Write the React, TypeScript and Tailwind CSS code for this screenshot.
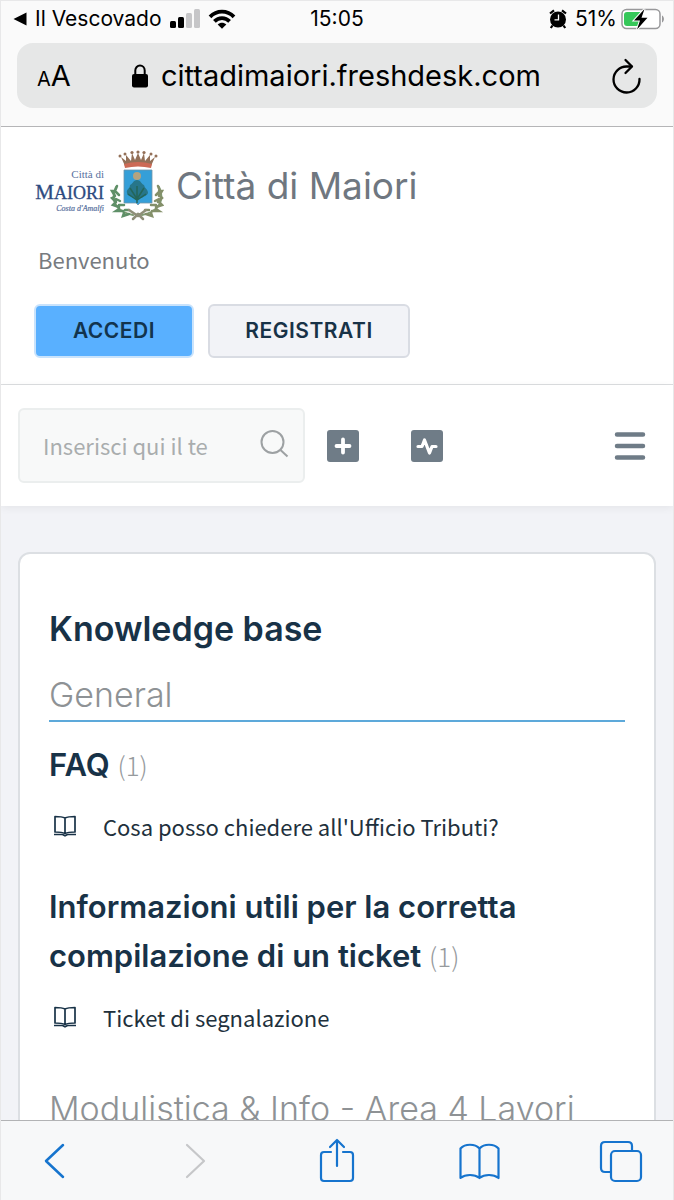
import React from "react";

const ui = "font-['Inter','Liberation_Sans',sans-serif]";
const body = "font-['Noto_Sans_CJK_SC','Noto_Sans',sans-serif]";

function StatusBar() {
  return (
    <div className="grid h-9 grid-cols-[1fr_auto_1fr] items-center px-2 text-[21px] leading-6 text-black">
      <div className="flex items-center pl-1">
        <svg viewBox="0 0 14 14" className="mr-2 h-[14px] w-[14px]" aria-hidden="true">
          <path d="M.5 7 13.5.5v13z" />
        </svg>
        <span className="mr-2">Il Vescovado</span>
        <svg viewBox="0 0 30 20" className="mr-2 h-5 w-[30px]" aria-hidden="true">
          <rect x="0" y="12" width="6" height="7" rx="1.5" />
          <rect x="8" y="8" width="6" height="11" rx="1.5" />
          <rect x="16" y="4" width="6" height="15" rx="1.5" fill="#c6c6c8" />
          <rect x="24" y="0" width="6" height="19" rx="1.5" fill="#c6c6c8" />
        </svg>
        <svg viewBox="0 0 28 20" className="h-5 w-7" aria-hidden="true">
          <g fill="none" stroke="#000" strokeWidth="3.8">
            <path d="M2 7.8C8.8 1 19.200 1 26 7.800" />
            <path d="M6.400 12.300C10.700 8 17.300 8 21.600 12.300" />
          </g>
          <path d="M9.700 15.500c2.500-2.300 6.100-2.300 8.600 0L14 19.800z" />
        </svg>
      </div>
      <span>15:05</span>
      <div className="flex items-center justify-end">
        <svg viewBox="0 0 18 20" className="mr-2 h-5 w-[18px]" aria-hidden="true">
          <circle cx="9" cy="10.500" r="8" />
          <path d="m1 4.500 4-3.200M17 4.500l-4-3.200M3.500 16.500 1.800 19M14.500 16.500l1.700 2.500" stroke="#000" strokeWidth="2.200" />
          <path d="M9.500 5.500v5.300H5.500" fill="none" stroke="#fff" strokeWidth="1.300" />
        </svg>
        <span className="mr-1">51%</span>
        <svg viewBox="0 0 44 22" className="h-[22px] w-11" aria-hidden="true">
          <rect x="1" y="1.500" width="38" height="19" rx="4.500" fill="#fff" stroke="#98989a" strokeWidth="1.500" />
          <path d="M6 4h14v14H6a3 3 0 0 1-3-3V7a3 3 0 0 1 3-3z" fill="#35c759" />
          <path d="M41 7.500c2.600 1.200 2.600 5.800 0 7z" fill="#98989a" />
          <path d="M23.500 1 13 12.500h6L16 21.500 26.500 9.800H20.500z" stroke="#fff" strokeWidth="2" paintOrder="stroke" />
        </svg>
      </div>
    </div>
  );
}

function AddressBar() {
  return (
    <div className="mx-4 mt-[6px] mb-[18px] flex h-[65px] items-center rounded-2xl bg-[#e6e7e7] px-5 text-black">
      <button type="button" aria-label="Dimensione testo" className="flex items-baseline pt-1 leading-8">
        <span className="text-[20px]">A</span>
        <span className="text-[29px]">A</span>
      </button>
      <div className="flex flex-1 items-center justify-center pr-[10px]">
        <svg viewBox="0 0 18 24" className="mr-3 h-6 w-[18px]" aria-hidden="true">
          <rect x="1" y="10" width="16" height="13.500" rx="2" />
          <path d="M4.300 11V6.500a4.700 5 0 0 1 9.400 0V11" fill="none" stroke="#000" strokeWidth="2" />
        </svg>
        <span className="text-[29px] leading-9">cittadimaiori.freshdesk.com</span>
      </div>
      <button type="button" aria-label="Ricarica" className="-mr-2">
        <svg viewBox="0 0 34 36" className="h-9 w-[34px]" fill="none" stroke="#000" strokeWidth="2.300" strokeLinecap="round" strokeLinejoin="round">
          <path d="M20.500 8.500H16A13 13 0 1 0 28.500 21" />
          <path d="M14.500 2 21 8.500 14.500 15" />
        </svg>
      </button>
    </div>
  );
}

function Crest() {
  return (
    <svg viewBox="0 0 130 74" className="h-[74px] w-[130px] shrink-0" role="img" aria-label="Città di Maiori, Costa d'Amalfi">
      <g textAnchor="end" fontFamily="'Liberation Serif', serif">
        <text x="70" y="29" fontSize="11" fill="#5871a0">Città di</text>
        <text x="70" y="50" fontSize="21" fill="#2d4a80" stroke="#2d4a80" strokeWidth=".3">M<tspan fontSize="18">AIORI</tspan></text>
        <text x="70" y="62" fontSize="8" fontStyle="italic" fill="#5871a0" stroke="#5871a0" strokeWidth=".2">Costa d'Amalfi</text>
      </g>
      <g fill="none" strokeLinecap="round">
        <path d="M82 38c-6 13 0 25 17 28M125 38c6 13 0 25-17 28" stroke="#7f9b72" strokeWidth="2" />
        <path d="m83 37-2 5M81 42l-3 0 3 5M80 48l-2 1 4 4M81 54l-2 2 6 2M85 60l-3 2 7 0M90 64l-1 3 6-2M82 43l3 3M82 50l4 2M85 56l5 0M91 61l4 0" stroke="#5f9068" strokeWidth="2.500" />
        <path d="m124 37 2 5M125 42l3 0-3 5M127 48l1 1-4 4M126 54l2 2-6 2M122 60l3 2-7 0M117 64l1 3-6-2M125 43l-3 3M125 50l-4 2M122 56l-5 0M115 61l-4 0" stroke="#84906a" strokeWidth="2.500" />
        <path d="m95 61 9 6 8-6M99 70l5-5 5 5" stroke="#8f8f78" strokeWidth="2.500" />
      </g>
      <path d="m91 17-4-9 5 4 0-6 5 6 1-8 3 7 3-7 3 7 3-7 1 8 5-6 0 6 5-4-4 9z" fill="#937058" />
      <path d="M90 15q14-4 28 0l-1 4q-13-3-26 0z" fill="#cc6a55" />
      <g fill="#937058">
        <circle cx="86" cy="7" r="1.500" /><circle cx="91" cy="5" r="1.500" /><circle cx="98" cy="3.500" r="1.600" /><circle cx="104" cy="3" r="1.600" /><circle cx="110" cy="3.500" r="1.600" /><circle cx="117" cy="5" r="1.500" /><circle cx="122" cy="7" r="1.500" />
      </g>
      <path d="M90 21h28v33h-12l-2 2-2-2h-12z" fill="#359fd8" stroke="#7294a8" strokeWidth=".8" />
      <circle cx="103" cy="27" r="4" fill="#b5a380" />
      <path d="M103 31c-4 0-4 4-7 5 0 4-4 4-3 8 0 3 4 3 6 5h9c2-2 5-2 6-5 0-4-3-4-4-8-3-1-3-5-7-5z" fill="#27768a" />
      <path d="M103 37v17M96 39l7 11 7-11M94 45l9 6 9-6" fill="none" stroke="#24665a" strokeWidth="1.500" />
    </svg>
  );
}

function ArticleLink({ children }: { children: React.ReactNode }) {
  return (
    <a href="#" className={`flex items-center pl-1 text-[22px] leading-9 text-[#21303c] ${body}`}>
      <svg viewBox="0 0 24 22" className="mr-[26px] h-[22px] w-6 shrink-0" fill="none" stroke="#183247" strokeWidth="1.700" strokeLinejoin="round" aria-hidden="true">
        <path d="M12 3Q9 1.500 2 1.500v15.500q7 0 10 1.500 3-1.500 10-1.500V1.500Q15 1.500 12 3zM12 3v15.500" />
        <path d="M1 19.500h8.500l2.500 1.300 2.500-1.300H23" />
      </svg>
      {children}
    </a>
  );
}

function Count({ value }: { value: number }) {
  return <span className={`text-[26px] font-light text-[#969a9d] ${body}`}>{`(${value})`}</span>;
}

function Toolbar() {
  const icon = "h-12 w-12";
  return (
    <nav aria-label="Browser" className="flex h-20 shrink-0 items-center justify-between border-t border-[#b2b3b5] bg-[#f7f8f9] px-7 text-[#1674ce]">
      <button type="button" aria-label="Indietro">
        <svg viewBox="0 0 48 48" className={icon} fill="none" stroke="currentColor" strokeWidth="2.500" strokeLinecap="round" strokeLinejoin="round"><path d="M34 8 17 24l17 16" /></svg>
      </button>
      <button type="button" aria-label="Avanti" disabled className="text-[#c6c7c9]">
        <svg viewBox="0 0 48 48" className={icon} fill="none" stroke="currentColor" strokeWidth="2.200" strokeLinecap="round" strokeLinejoin="round"><path d="m16 8 17 16-17 16" /></svg>
      </button>
      <button type="button" aria-label="Condividi">
        <svg viewBox="0 0 48 48" className={icon} fill="none" stroke="currentColor" strokeWidth="2.200" strokeLinecap="round" strokeLinejoin="round"><path d="M18 15h-7q-3 0-3 3v23q0 3 3 3h26q3 0 3-3V18q0-3-3-3h-7M24 29V3M17 10l7-7 7 7" /></svg>
      </button>
      <button type="button" aria-label="Preferiti">
        <svg viewBox="0 0 48 48" className={icon} fill="none" stroke="currentColor" strokeWidth="2.200" strokeLinejoin="round"><path d="M24.500 11.500C20 6.500 10 6.500 5.500 11.500V41c5-4 14-4 19 0 5-4 14-4 19 0V11.500c-4.500-5-14.500-5-19 0zM24.500 11.500V41" /></svg>
      </button>
      <button type="button" aria-label="Schede">
        <svg viewBox="0 0 48 48" className={icon} fill="none" stroke="currentColor" strokeWidth="2.200" strokeLinejoin="round"><rect x="14" y="14" width="30" height="30" rx="4" /><path d="M14 35H8q-4 0-4-4V9q0-4 4-4h23q4 0 4 4v5" /></svg>
      </button>
    </nav>
  );
}

export default function App() {
  return (
    <div className={`flex h-screen flex-col overflow-hidden border-x border-t border-[#e8e8e9] bg-[#fafafa] ${ui}`}>
      <header className="shrink-0 border-b border-[#b5b5b7]">
        <StatusBar />
        <AddressBar />
      </header>

      <main className="min-h-0 flex-1 overflow-hidden bg-[#f2f3f7]">
        <section className="border-b border-[#dcdee0] bg-white px-[33px] pt-[22px] pb-[26px]">
          <div className="flex items-center">
            <Crest />
            <h1 className="ml-3 text-[37px] leading-[48px] text-[#6f7780]">Città di Maiori</h1>
          </div>
          <p className={`mt-4 ml-1 text-[22px] leading-10 text-[#777b80] ${body}`}>Benvenuto</p>
          <div className="mt-[25px] flex gap-[14px]">
            <a href="#" className="flex h-[54px] w-[160px] items-center justify-center rounded-md border-2 border-[#c9e3fc] bg-[#59b0ff] text-[21px] font-semibold tracking-wide text-[#12344d]">ACCEDI</a>
            <a href="#" className="flex h-[54px] w-[202px] items-center justify-center rounded-md border-2 border-[#d9dce3] bg-[#f2f3f7] text-[21px] font-semibold tracking-wide text-[#183247]">REGISTRATI</a>
          </div>
        </section>

        <section className="flex items-center bg-white py-[23px] pr-[27px] pl-[17px] shadow-[0_2px_8px_rgba(0,0,0,0.06)]">
          <form className="flex h-[75px] w-[287px] items-center rounded-md border-2 border-[#ebeeee] bg-[#f8f9f9] pr-[14px] pl-[23px]">
            <input aria-label="Cerca" placeholder="Inserisci qui il te" className={`mb-[2px] min-w-0 flex-1 bg-transparent text-[22px] leading-9 outline-none placeholder:text-[#a9adae] ${body}`} />
            <button type="submit" aria-label="Avvia ricerca">
              <svg viewBox="0 0 30 30" className="mb-1 h-[30px] w-[30px]" fill="none" stroke="#9da1a3" strokeWidth="2"><circle cx="13.500" cy="13" r="11" /><path d="m21.500 21 7 6.500" /></svg>
            </button>
          </form>
          <a href="#" aria-label="Nuovo ticket" className="ml-[22px]">
            <svg viewBox="0 0 32 32" className="h-8 w-8"><rect width="32" height="32" rx="3" fill="#6f7c87" /><path d="M16 9.500v13M9.500 16h13" stroke="#fff" strokeWidth="3.800" strokeLinecap="round" /></svg>
          </a>
          <a href="#" aria-label="Stato ticket" className="ml-[52px]">
            <svg viewBox="0 0 32 32" className="h-8 w-8"><rect width="32" height="32" rx="3" fill="#6f7c87" /><path d="M7 16.500h4l2.500-6.500 5 13 2.500-6.500h4" fill="none" stroke="#fff" strokeWidth="3.200" strokeLinecap="round" strokeLinejoin="round" /></svg>
          </a>
          <button type="button" aria-label="Menu" className="ml-auto">
            <svg viewBox="0 0 32 32" className="h-8 w-8" stroke="#6f7c87" strokeWidth="4.500" strokeLinecap="round"><path d="M3 4.500h26M3 16h26M3 27.500h26" /></svg>
          </button>
        </section>

        <section className="mx-[17px] mt-[46px] rounded-xl border-2 border-[#dcdfe3] bg-white px-[29px] pt-[51px] text-[#183247]">
          <h2 className="text-[34px] leading-[48px] font-semibold">Knowledge base</h2>
          <h3 className="mt-[18px] border-b-2 border-[#5da9da] pb-px text-[34px] leading-[48px] font-light text-[#8e9295]">General</h3>
          <h4 className="mt-[18px] text-[31px] leading-[49px] font-semibold">FAQ <Count value={1} /></h4>
          <div className="mt-[19px]">
            <ArticleLink>Cosa posso chiedere all'Ufficio Tributi?</ArticleLink>
          </div>
          <h4 className="mt-[38px] text-[31px] leading-[49px] font-semibold">Informazioni utili per la corretta compilazione di un ticket <Count value={1} /></h4>
          <div className="mt-[19px]">
            <ArticleLink>Ticket di segnalazione</ArticleLink>
          </div>
          <h3 className="mt-[50px] text-[34px] leading-[48px] font-light text-[#8e9295]">Modulistica &amp; Info - Area 4 Lavori</h3>
        </section>
      </main>
      <Toolbar />
    </div>
  );
}
